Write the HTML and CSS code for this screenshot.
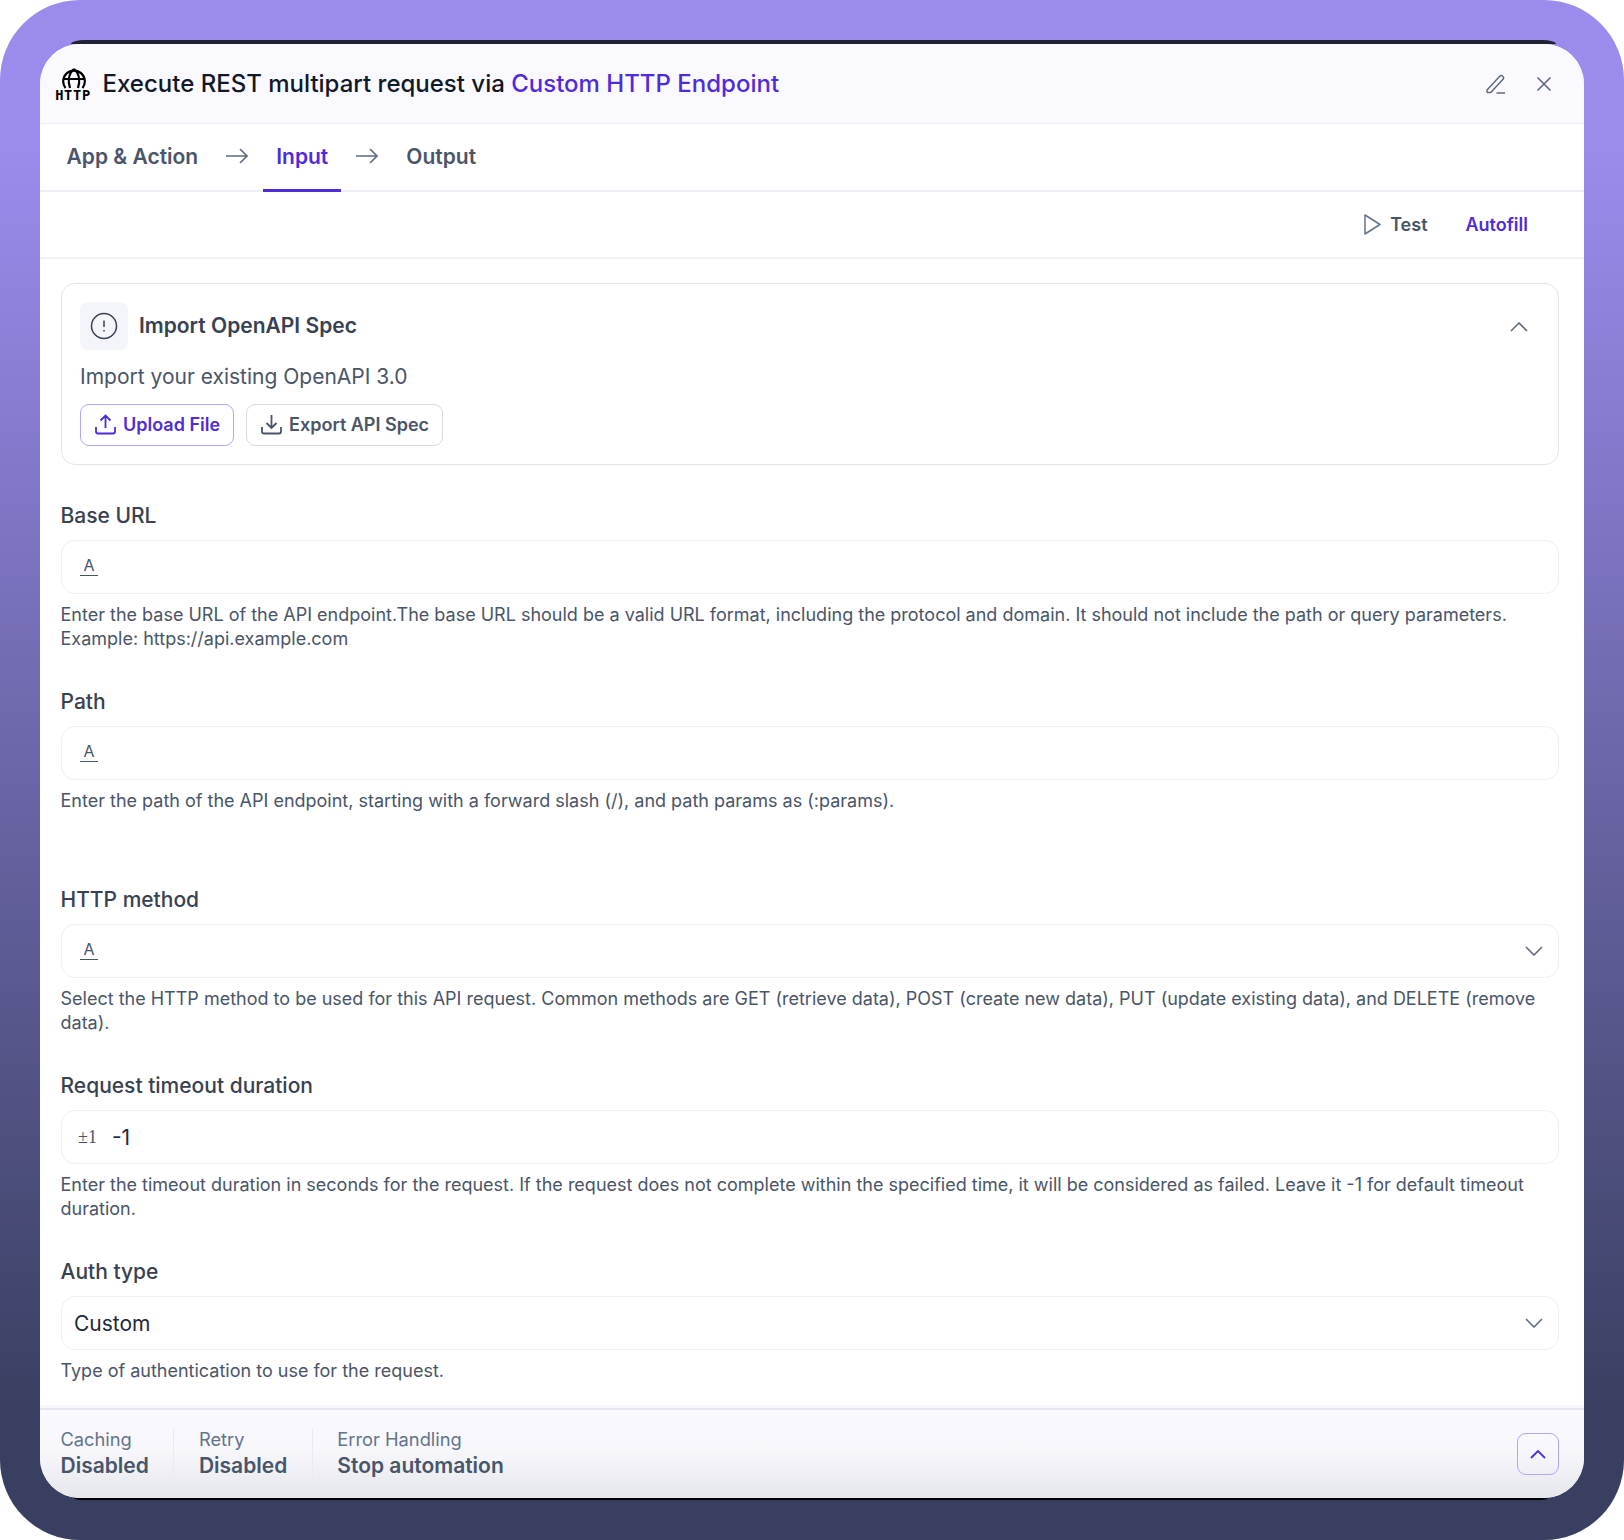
FILE: index.html
```html
<!DOCTYPE html>
<html lang="en">
<head>
<meta charset="utf-8">
<title>Execute REST multipart request</title>
<link rel="stylesheet" href="styles.css">
</head>
<body>
<div class="frame">
  <main class="modal">
    <header class="head">
      <div class="http-icon">
        <svg class="globe" viewBox="0 0 24 21" width="24" height="21" fill="none" stroke="#000" stroke-width="2.200"><path d="M3.500 20A10.800 10.800 0 1 1 20.500 20"/><path d="M12 1C6 6 6 14 8 20M12 1c6 5 6 13 4 19M1.500 11h21"/></svg>
        <span class="http-text">HTTP</span>
      </div>
      <h1 class="title">Execute REST multipart request via <span class="accent">Custom HTTP Endpoint</span></h1>
      <div class="head-actions">
        <svg class="ic" width="22" height="22" viewBox="0 0 22 22" fill="none" stroke="#5f6b7c" stroke-width="1.5" stroke-linejoin="round"><path d="M2 17 14.800 3.200a2.200 2.200 0 0 1 3.200 3L5.800 19.600H3.200A1.200 1.200 0 0 1 2 18.400z"/><path d="M11.500 20h8.500"/></svg>
        <svg class="ic" width="16" height="16" viewBox="0 0 16 16" fill="none" stroke="#5f6b7c" stroke-width="1.6"><path d="M1.500 1.500l13 13M14.500 1.500l-13 13"/></svg>
      </div>
    </header>

    <nav class="tabs">
      <span class="tab">App &amp; Action</span>
      <svg class="arrow" width="22" height="16" viewBox="0 0 22 16" fill="none" stroke="#5f6b7c" stroke-width="1.600"><path d="M0 8h21M14 1l7 7-7 7"/></svg>
      <span class="tab tab-active">Input</span>
      <svg class="arrow" width="22" height="16" viewBox="0 0 22 16" fill="none" stroke="#5f6b7c" stroke-width="1.600"><path d="M0 8h21M14 1l7 7-7 7"/></svg>
      <span class="tab">Output</span>
    </nav>

    <div class="toolbar">
      <span class="test"><svg width="17" height="21" viewBox="0 0 17 21" fill="none" stroke="#64748b" stroke-width="1.500" stroke-linejoin="round"><path d="M1 1v19l15-9.500z"/></svg>Test</span>
      <span class="autofill">Autofill</span>
    </div>

    <div class="content">
      <section class="card">
        <div class="card-head">
          <span class="card-icon"><svg width="28" height="28" viewBox="0 0 28 28" fill="none" stroke="#374151" stroke-width="1.500"><circle cx="14" cy="14" r="12.500"/><path d="M14 8.500v6.500M14 18v1.500"/></svg></span>
          <h2 class="card-title">Import OpenAPI Spec</h2>
          <svg class="card-chev" width="18" height="10" viewBox="0 0 18 10" fill="none" stroke="#5f6b7c" stroke-width="1.600"><path d="M1 9l8-8 8 8"/></svg>
        </div>
        <p class="card-desc">Import your existing OpenAPI 3.0</p>
        <div class="card-btns">
          <span class="btn btn-primary"><svg width="21" height="21" viewBox="0 0 21 21" fill="none" stroke="currentColor" stroke-width="1.800"><path d="M10.500 14V2M5.500 6.500l5-5 5 5M1 13v4.500a2 2 0 0 0 2 2h15a2 2 0 0 0 2-2V13"/></svg>Upload File</span>
          <span class="btn"><svg width="21" height="21" viewBox="0 0 21 21" fill="none" stroke="currentColor" stroke-width="1.800"><path d="M10.500 1v12.500M5.500 9l5 5 5-5M1 13v4.500a2 2 0 0 0 2 2h15a2 2 0 0 0 2-2V13"/></svg>Export API Spec</span>
        </div>
      </section>

      <div class="field">
        <label class="label">Base URL</label>
        <div class="input"><span class="type-a">A</span></div>
        <p class="help">Enter the base URL of the API endpoint.The base URL should be a valid URL format, including the protocol and domain. It should not include the path or query parameters. Example: https://api.example.com</p>
      </div>

      <div class="field field-spaced">
        <label class="label">Path</label>
        <div class="input"><span class="type-a">A</span></div>
        <p class="help">Enter the path of the API endpoint, starting with a forward slash (/), and path params as (:params).</p>
      </div>

      <div class="field">
        <label class="label">HTTP method</label>
        <div class="input"><span class="type-a">A</span><svg class="chev" width="18" height="10" viewBox="0 0 18 10" fill="none" stroke="#5f6b7c" stroke-width="1.600"><path d="M1 1l8 8 8-8"/></svg></div>
        <p class="help">Select the HTTP method to be used for this API request. Common methods are GET (retrieve data), POST (create new data), PUT (update existing data), and DELETE (remove data).</p>
      </div>

      <div class="field">
        <label class="label">Request timeout duration</label>
        <div class="input"><span class="type-num">±1</span><span class="value">-1</span></div>
        <p class="help">Enter the timeout duration in seconds for the request. If the request does not complete within the specified time, it will be considered as failed. Leave it -1 for default timeout duration.</p>
      </div>

      <div class="field">
        <label class="label">Auth type</label>
        <div class="input input-select"><span class="value">Custom</span><svg class="chev" width="18" height="10" viewBox="0 0 18 10" fill="none" stroke="#5f6b7c" stroke-width="1.600"><path d="M1 1l8 8 8-8"/></svg></div>
        <p class="help">Type of authentication to use for the request.</p>
      </div>
    </div>

    <footer class="foot">
      <div class="stat"><span class="stat-label">Caching</span><span class="stat-value">Disabled</span></div>
      <div class="stat"><span class="stat-label">Retry</span><span class="stat-value">Disabled</span></div>
      <div class="stat"><span class="stat-label">Error Handling</span><span class="stat-value">Stop automation</span></div>
      <span class="foot-btn"><svg width="16" height="10" viewBox="0 0 16 10" fill="none" stroke="#4f2bd9" stroke-width="1.800"><path d="M1 9l7-7 7 7"/></svg></span>
    </footer>
  </main>
</div>
</body>
</html>
```
FILE: styles.css
```css
* { box-sizing: border-box; }
html, body { margin: 0; padding: 0; background: #fff; }
body { font-family: Inter, "Noto Sans", sans-serif; color: #1f2937; }
h1, h2, p { margin: 0; }

.frame {
  width: 1624px; height: 1540px; padding: 44px 40px 42px;
  border-radius: 80px;
  background: linear-gradient(180deg, #9a8bec 10%, #393f60 92%);
}
.modal {
  position: relative;
  width: 1544px; height: 1454px;
  display: flex; flex-direction: column;
  background: #fff;
  border-radius: 40px;
}
.modal::before {
  content: ""; position: absolute;
  top: -4px; left: 31px; right: 28px; height: 4px;
  background: #1f2433;
  border-radius: 14px 14px 0 0 / 4px 4px 0 0;
}
.modal::after {
  content: ""; position: absolute;
  bottom: -1.500px; left: 34px; right: 36px; height: 2px;
  background: #000;
  border-radius: 0 0 10px 10px / 0 0 2px 2px;
}

.head {
  height: 80px; flex: none;
  display: flex; align-items: center;
  padding: 0 32px 0 16px;
  background: #f9f9ff;
  border-bottom: 1px solid #eeeef6;
  border-radius: 40px 40px 0 0;
}
.http-icon { width: 34px; display: flex; flex-direction: column; align-items: center; margin-right: 13px; margin-top: 2px; }
.globe { display: block; margin-left: 1px; }
.http-text { font: 700 13.700px/13px "DejaVu Sans Mono", monospace; letter-spacing: .7px; color: #000; }
.title { flex: 1; font-size: 24px; font-weight: 500; color: #111827; line-height: 32px; margin-left: -.5px; }
.accent { color: #4f2bd9; }
.head-actions { display: flex; align-items: center; gap: 29px; }
.ic { display: block; }

.tabs {
  height: 68px; flex: none;
  display: flex; align-items: stretch;
  padding-left: 13.500px;
  border-bottom: 2px solid #eeeef6;
}
.tab {
  padding: 0 13px 1px; display: flex; align-items: center;
  font-size: 21px; font-weight: 600; color: #4b5569;
  height: 68px;
  border-bottom: 3px solid transparent;
}
.tab-active { color: #4f2bd9; border-bottom-color: #4f2bd9; }
.arrow { align-self: center; margin: 0 15px 2px; flex: none; }

.toolbar {
  height: 67px; flex: none;
  display: flex; align-items: center; justify-content: flex-end; gap: 38px;
  padding-right: 56px;
  border-bottom: 2px solid #f0f0f7;
  font-size: 18px; font-weight: 600;
}
.test { display: flex; align-items: center; gap: 9px; color: #475569; }
.autofill { color: #4f2bd9; }

.content { flex: 1; min-height: 0; padding: 24px 25px 0 21px; overflow: hidden; }

.card {
  height: 182px;
  border: 1px solid #e3e5ec; border-radius: 14px;
  padding: 18px;
  margin-bottom: 37px;
}
.card-head { display: flex; align-items: center; gap: 12px; height: 48px; }
.card-icon { width: 48px; height: 48px; border-radius: 8px; background: #f4f5fa; display: flex; align-items: center; justify-content: center; }
.card-title { flex: 1; font-size: 21px; font-weight: 600; color: #374151; margin-bottom: 1px; margin-left: -1px; }
.card-chev { margin-right: 12px; margin-top: 2px; }
.card-desc { font-size: 21px; line-height: 28px; color: #4a5568; margin-top: 13px; }
.card-btns { display: flex; gap: 12px; margin-top: 13px; }
.btn {
  height: 42px; padding: 0 13px 1px 13.500px;
  display: flex; align-items: center; gap: 7.500px;
  border: 1px solid #d7d9e3; border-radius: 9px;
  font-size: 18px; font-weight: 600; color: #4a5568;
}
.btn-primary { color: #4f2bd9; border-color: #b3a4f8; }

.field { margin-bottom: 37px; }
.field-spaced { margin-bottom: 73px; }
.label { display: block; font-size: 21px; line-height: 28px; font-weight: 500; color: #374151; margin: 0 0 10px -.5px; }
.input {
  height: 54px;
  display: flex; align-items: center;
  padding: 0 15px 0 18px;
  border: 1px solid #eeeef6; border-radius: 14px;
}
.input-select { padding-left: 12px; }
.chev { margin-left: auto; }
.type-a { font-size: 16px; line-height: 15px; color: #4a5568; border-bottom: 1.500px solid #4a5568; padding: 0 3.500px 2px; }
.type-num { font-family: "Liberation Serif", serif; font-size: 18px; color: #4a5568; margin-left: -2px; margin-right: 15px; }
.value { font-size: 21px; color: #1f2937; }
.help { font-size: 18px; line-height: 24px; color: #4a5568; margin: 9px 0 0 -.5px; }

.foot {
  height: 90px; flex: none;
  display: flex; align-items: center;
  padding: 0 25px 4px 20.500px;
  border-top: 2px solid #e6e7f2;
  border-radius: 0 0 40px 40px;
  background: linear-gradient(180deg, #f9f9ff 0%, #f7f7fc 45%, #e6e7ec 100%);
  box-shadow: 0 -3px 0 #f6f6fb;
}
.stat { display: flex; flex-direction: column; gap: 7px; padding-right: 24.500px; margin-right: 24.500px; border-right: 1px solid #eaeaf2; }
.stat:nth-child(3) { border-right: 0; }
.stat-label { font-size: 18.300px; line-height: 20px; color: #64748b; }
.stat-value { font-size: 21px; line-height: 20px; font-weight: 600; color: #475569; }
.foot-btn { margin-left: auto; margin-top: 4px; width: 42px; height: 42px; border: 1px solid #b3a4f8; border-radius: 9px; display: flex; align-items: center; justify-content: center; }
```
